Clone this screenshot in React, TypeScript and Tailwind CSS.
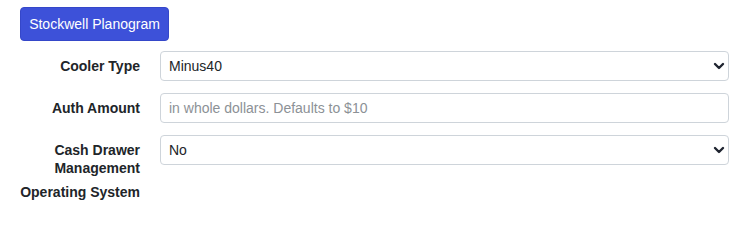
import React from "react";

const Chevron = () => (
  <svg
    className="pointer-events-none absolute right-[4px] top-1/2 -translate-y-1/2"
    width="12"
    height="8"
    viewBox="0 0 12 8"
  >
    <path
      d="M2 2l4 4 4-4"
      fill="none"
      stroke="#1f2430"
      strokeWidth="2.4"
      strokeLinecap="round"
      strokeLinejoin="round"
    />
  </svg>
);

export default function App() {
  return (
    <div
      className="w-[754px] h-[219px] bg-white pl-[20px] pt-[7px] text-[#212529]"
      style={{ fontFamily: '"Liberation Sans", Arial, sans-serif' }}
    >
      <button className="h-[34px] w-[149px] rounded-[4px] border border-[#3547c9] bg-[#3d51d9] text-[14px] text-white">
        Stockwell Planogram
      </button>

      <div className="mt-[10px] w-[709px] flex flex-col">
        <div className="flex items-start gap-[20px]">
          <div className="w-[120px] pt-[6px] text-right text-[14px] font-bold leading-[18px]">
            Cooler Type
          </div>
          <div className="relative flex-1">
            <div className="h-[30px] rounded-[4px] border border-[#ced4da] pl-[8px] text-[14px] leading-[28px]">
              Minus40
            </div>
            <Chevron />
          </div>
        </div>

        <div className="mt-[12px] flex items-start gap-[20px]">
          <div className="w-[120px] pt-[6px] text-right text-[14px] font-bold leading-[18px]">
            Auth Amount
          </div>
          <div className="flex-1">
            <div className="h-[30px] rounded-[4px] border border-[#ced4da] pl-[8px] text-[14px] leading-[28px] text-[#8c9196]">
              in whole dollars. Defaults to $10
            </div>
          </div>
        </div>

        <div className="mt-[12px] flex items-start gap-[20px]">
          <div className="w-[120px] pt-[6px] text-right text-[14px] font-bold leading-[18px]">
            Cash Drawer Management
          </div>
          <div className="relative flex-1">
            <div className="h-[30px] rounded-[4px] border border-[#ced4da] pl-[8px] text-[14px] leading-[28px]">
              No
            </div>
            <Chevron />
          </div>
        </div>

        <div className="mt-[6px] flex items-start gap-[20px]">
          <div className="w-[120px] text-right text-[14px] font-bold leading-[18px]">
            Operating System
          </div>
        </div>
      </div>
    </div>
  );
}
